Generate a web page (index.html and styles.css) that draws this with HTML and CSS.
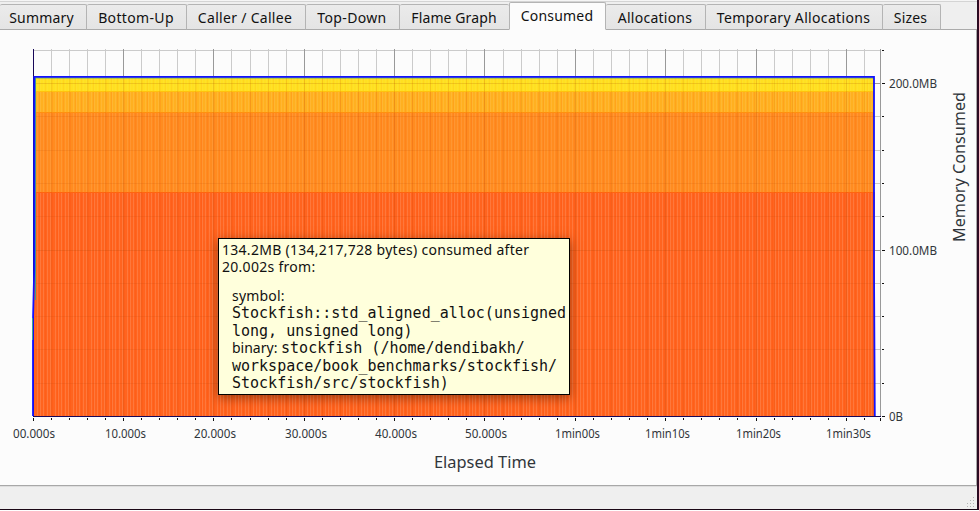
FILE: index.html
```html
<!DOCTYPE html>
<html lang="en">
<head>
<meta charset="utf-8">
<title>Consumed</title>
<link rel="stylesheet" href="styles.css">
</head>
<body>
<div class="window">
  <nav class="tabs">
    <div class="tab t1"><span>Summary</span></div>
    <div class="tab t2"><span>Bottom-Up</span></div>
    <div class="tab t3"><span>Caller / Callee</span></div>
    <div class="tab t4"><span>Top-Down</span></div>
    <div class="tab t5"><span>Flame Graph</span></div>
    <div class="tab t6 active"><span>Consumed</span></div>
    <div class="tab t7"><span>Allocations</span></div>
    <div class="tab t8"><span>Temporary Allocations</span></div>
    <div class="tab t9"><span>Sizes</span></div>
  </nav>
  <main class="page">
    <svg class="chart" id="chart" width="976" height="455" viewBox="0 30 976 455">
      <defs>
        <pattern id="stripes" width="18" height="10" patternUnits="userSpaceOnUse">
          <path class="light" d="M1.5 0v10M4.5 0v10M7.5 0v10M11.5 0v10M14.5 0v10"/>
          <path class="dark" d="M3.5 0v10M9.5 0v10M16.5 0v10"/>
        </pattern>
      </defs>
      <g id="grid"></g>
      <g shape-rendering="crispEdges">
        <rect class="yellow" x="35" y="77" width="839" height="15"/>
        <rect class="amber" x="35" y="91" width="839" height="21"/>
        <rect class="orange" x="35" y="112" width="839" height="80"/>
        <rect class="red" x="34" y="192" width="841" height="224"/>
        <rect x="35" y="91" width="839" height="101" fill="url(#stripes)" opacity=".65"/>
        <rect x="35" y="192" width="839" height="224" fill="url(#stripes)"/>
        <rect x="35" y="78" width="839" height="13" fill="url(#stripes)" opacity=".35"/>
        <path class="edge-yellow" d="M35 91.5h839"/>
        <path class="edge-orange" d="M35 112.5h839"/>
        <path class="edge-red" d="M35 192.5h839"/>
      </g>
      <g id="overlay"></g>
      <path class="teal" d="M35.5 300V78M34 77.9h840"/>
      <path class="axis" d="M33.5 49v367.5h847"/>
      <path class="total" d="M33 416V320L34.2 270V76.8h839.8V270l.8 146"/>
      <path class="teal" d="M32.5 340V318"/>
      <g id="labels"></g>
      <text class="title" x="434" y="468" textLength="102" lengthAdjust="spacingAndGlyphs">Elapsed Time</text>
      <text class="title" transform="translate(965 242) rotate(-90)" textLength="150" lengthAdjust="spacingAndGlyphs">Memory Consumed</text>
    </svg>
    <aside class="tooltip">
      <div class="summary">134.2MB (134,217,728 bytes) consumed after</div>
      <div class="summary">20.002s from:</div>
      <div class="detail">
        <div>symbol:</div>
        <div><code>Stockfish::std_aligned_alloc(unsigned</code></div>
        <div><code>long, unsigned long)</code></div>
        <div><span class="key">binary: </span><code>stockfish (/home/dendibakh/</code></div>
        <div><code>workspace/book_benchmarks/stockfish/</code></div>
        <div><code>Stockfish/src/stockfish)</code></div>
      </div>
    </aside>
  </main>
  <footer class="status">
    <svg class="grip" width="10" height="11" viewBox="0 0 10 11"><path d="M7 1.5h1M4 4.5h1M7 4.5h1M1 7.5h1M4 7.5h1M7 7.5h1M1 10.5h1M4 10.5h1M7 10.5h1"/></svg>
  </footer>
</div>
<script src="chart.js"></script>
</body>
</html>
```
FILE: styles.css
```css
* { box-sizing: border-box; }
body { margin: 0; width: 979px; height: 511px; overflow: hidden; background: #fff; font-family: "Noto Sans", sans-serif; color: #111; }
.window { width: 979px; height: 510px; display: flex; flex-direction: column; background: #efefef; border-right: 2px solid #2c0a22; border-bottom: 1px solid #1b0716; }
.tabs { height: 30px; flex: none; display: flex; align-items: flex-end; border-top: 1px solid #f5f5f5; box-shadow: inset 0 1px #d4d4d4, inset 0 -1px #ababab; }
.tab { height: 26px; flex: none; display: flex; align-items: center; justify-content: center; border: 1px solid #b4b4b4; border-left-width: 0; border-bottom-color: #ababab; border-radius: 2px 2px 0 0; background: linear-gradient(#ebebeb, #e4e4e4); font-size: 14px; letter-spacing: .2px; white-space: nowrap; }
.tab span { line-height: 20px; padding-top: 1px; }
.t1 { width: 87px; padding-right: 3px; }
.t2 { width: 100px; padding-right: 1px; letter-spacing: .35px; }
.t3 { width: 119px; padding-right: 2px; letter-spacing: .3px; }
.t4 { width: 94px; padding-right: 1px; letter-spacing: .35px; }
.t5 { width: 109px; border-right: 0; padding-right: 1px; letter-spacing: .1px; }
.t6 { width: 97px; padding-right: 1px; }
.t7 { width: 100px; padding-right: 1px; letter-spacing: .25px; }
.t8 { width: 177px; letter-spacing: .33px; padding-right: 1px; }
.t9 { width: 58px; padding-right: 2px; }
.tab.active { height: 28px; border-left-width: 1px; border-bottom-color: #fcfcfc; background: #fcfcfc; padding-bottom: 1px; }
.page { position: relative; height: 456px; flex: none; background: #fcfcfc; border-right: 1px solid #a8a8a8; border-bottom: 1px solid #a8a8a8; }
.chart { display: block; }
.light { stroke: #fff; stroke-opacity: .13; }
.dark { stroke: #f40; stroke-opacity: .2; }
.yellow { fill: #ffe020; }
.amber { fill: #ffb020; }
.orange { fill: #ff8c20; }
.red { fill: #ff641f; }
.edge-yellow { stroke: #ffc20e; }
.edge-orange { stroke: #ff9010; }
.edge-red { stroke: #ff6510; }
.teal { fill: none; stroke: #3fa08c; stroke-width: 1; }
.axis { fill: none; stroke: #180858; shape-rendering: crispEdges; }
.total { fill: none; stroke: #1212ff; stroke-width: 1.8; }
.minor { stroke: #cbcbcb; }
.major { stroke: #999; }
.over { stroke: #a33c00; stroke-opacity: .1; }
.over.strong { stroke-opacity: .17; }
.tick { stroke: #111; }
.label { font-size: 12px; fill: #31363b; }
.title { font-size: 16px; fill: #31363b; }
.tooltip { position: absolute; left: 218px; top: 208px; width: 352px; height: 157px; padding: 2px 3px; background: #ffffdc; border: 1px solid #000; box-shadow: 0 3px 10px rgba(60, 20, 0, .5); font-size: 14px; line-height: 17px; color: #111; white-space: nowrap; }
.summary { letter-spacing: .28px; }
.detail { margin: 12px 0 0 10px; }
.detail div { height: 17.4px; line-height: 17.4px; letter-spacing: .2px; }
.detail .key { letter-spacing: 0; }
.tooltip code { font: 15px/0 "DejaVu Sans Mono", monospace; letter-spacing: 0; }
.status { flex: 1; display: flex; justify-content: flex-end; align-items: flex-end; padding: 0 1px 2px 0; border-top: 1px solid #dedede; }
.grip { stroke: #b5b5b5; }
```
FILE: chart.js
```js
const NS = 'http://www.w3.org/2000/svg';
const layer = id => document.getElementById(id);
function line(parent, x1, y1, x2, y2, cls) {
  const el = document.createElementNS(NS, 'path');
  el.setAttribute('d', `M${x1} ${y1}L${x2} ${y2}`);
  el.setAttribute('class', cls);
  parent.appendChild(el);
}
function label(text, x, y, width) {
  const el = document.createElementNS(NS, 'text');
  el.textContent = text;
  el.setAttribute('x', x);
  el.setAttribute('y', y);
  el.setAttribute('textLength', width);
  el.setAttribute('lengthAdjust', 'spacingAndGlyphs');
  el.setAttribute('class', 'label');
  layer('labels').appendChild(el);
}
for (let i = 1; i <= 10; i++) {
  const y = Math.round(416 - i * 33.28) + 0.5;
  line(layer('grid'), 33, y, 881, y, i % 5 ? 'minor' : 'major');
  line(layer('overlay'), 35, y, 874, y, i % 5 ? 'over' : 'over strong');
}
line(layer('grid'), 33, 50.5, 881, 50.5, 'minor');
for (let i = 1; i <= 46; i++) {
  const x = Math.floor(33.2 + i * 18.07) + 0.5;
  line(layer('grid'), x, 49, x, 416, i % 5 ? 'minor' : 'major');
  line(layer('overlay'), x, 78, x, 416, i % 5 ? 'over' : 'over strong');
}
line(layer('grid'), 880.5, 49, 880.5, 416, 'major');
for (let i = 0; i <= 46; i++) {
  const x = Math.floor(33.2 + i * 18.07) + 0.5;
  line(layer('labels'), x, 418, x, i % 5 ? 420 : 421, 'tick');
}
line(layer('labels'), 880.5, 418, 880.5, 421, 'tick');
for (let i = 0; i <= 11; i++) {
  const y = Math.round(416 - i * 33.28) + 0.5;
  line(layer('labels'), 882, y, i % 5 ? 884 : 885, y, 'tick');
}
[['00.000s', 13, 42], ['10.000s', 105, 41], ['20.000s', 194, 42], ['30.000s', 285, 42], ['40.000s', 375, 42], ['50.000s', 465, 42],
 ['1min00s', 555, 45], ['1min10s', 645, 45], ['1min20s', 736, 45], ['1min30s', 826, 45]].forEach(([t, x, w]) => label(t, x, 438, w));
label('200.0MB', 889, 88, 48);
label('100.0MB', 889, 255, 48);
label('0B', 889, 421, 14);
```
